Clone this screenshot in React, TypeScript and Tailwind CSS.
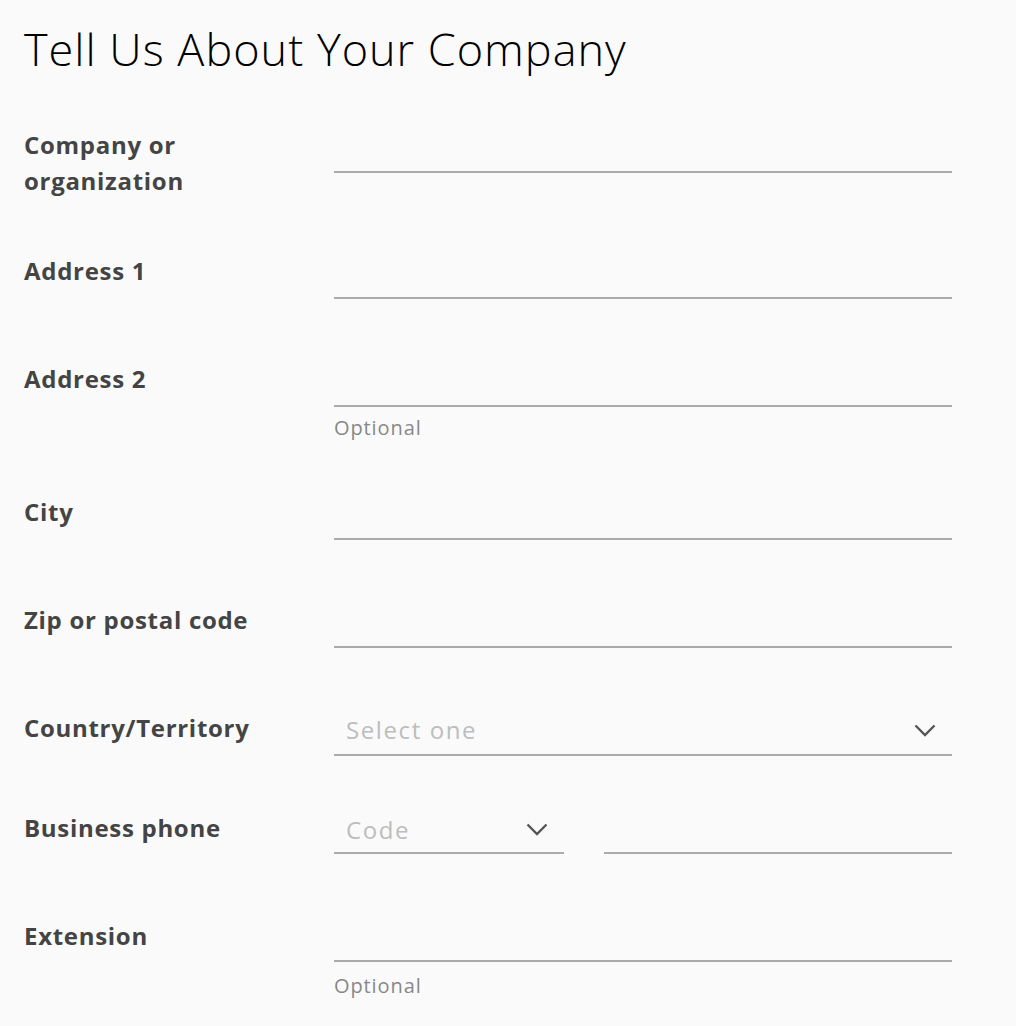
const fields = [
  { label: ['Company or', 'organization'] },
  { label: ['Address 1'] },
  { label: ['Address 2'], helper: 'Optional' },
  { label: ['City'] },
  { label: ['Zip or postal code'] },
];

function Chevron({ className }: { className?: string }) {
  return (
    <svg className={className} width="22" height="13" viewBox="0 0 22 13" fill="none">
      <path d="M1.5 1.5 L11 11 L20.5 1.5" stroke="#555" strokeWidth="2.4" />
    </svg>
  );
}

function Label({ lines }: { lines: string[] }) {
  return (
    <div className="w-[310px] shrink-0 text-[24px] leading-[36px] font-bold tracking-[0.7px] text-[#444]">
      {lines.map((l) => (
        <div key={l}>{l}</div>
      ))}
    </div>
  );
}

export default function App() {
  return (
    <div className="min-h-screen bg-[#fafafa] px-6 pr-16 pt-[21px] pb-10 font-['Open_Sans',sans-serif]">
      <h1 className="text-[45px] leading-[56px] font-light tracking-[1px] text-black">Tell Us About Your Company</h1>

      <div className="mt-[50px] flex flex-col gap-[54px]">
        {fields.map((f) => (
          <div key={f.label[0]} className="flex">
            <Label lines={f.label} />
            <div className="flex-1 min-h-[54px]">
              <div className="h-[46px] border-b-2 border-[#ababab]" />
              {f.helper && (
                <div className="mt-[9px] text-[20px] leading-6 tracking-[0.9px] text-[#888]">{f.helper}</div>
              )}
            </div>
          </div>
        ))}

        {/* Country select */}
        <div className="flex">
          <Label lines={['Country/Territory']} />
          <div className="flex-1">
            <div className="h-[46px] border-b-2 border-[#ababab] flex items-center justify-between pl-3 pr-4 pb-[5px]">
              <span className="text-[24px] tracking-[1.6px] text-[#bdbdbd]">Select one</span>
              <Chevron className="mt-[2px]" />
            </div>
          </div>
        </div>

        {/* Business phone */}
        <div className="flex">
          <Label lines={['Business phone']} />
          <div className="flex-1 min-h-[54px] flex gap-10">
            <div className="w-[230px] h-[44px] border-b-2 border-[#ababab] flex items-center justify-between pl-3 pr-4 pb-[3px]">
              <span className="text-[24px] tracking-[1.6px] text-[#bdbdbd]">Code</span>
              <Chevron />
            </div>
            <div className="flex-1 h-[44px] border-b-2 border-[#ababab]" />
          </div>
        </div>

        {/* Extension */}
        <div className="flex">
          <Label lines={['Extension']} />
          <div className="flex-1">
            <div className="h-[44px] border-b-2 border-[#ababab]" />
            <div className="mt-3 text-[20px] leading-6 tracking-[0.9px] text-[#888]">Optional</div>
          </div>
        </div>
      </div>
    </div>
  );
}
